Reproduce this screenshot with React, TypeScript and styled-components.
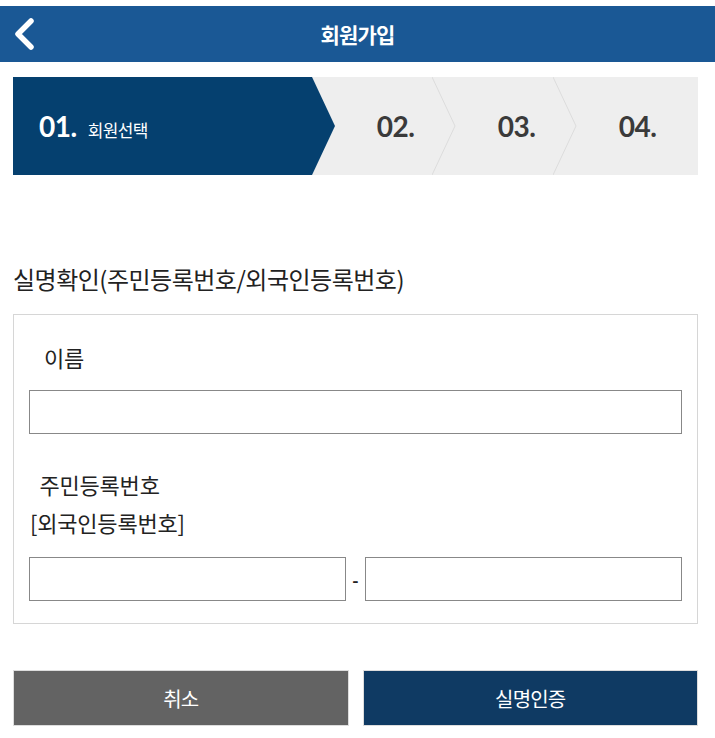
import * as React from 'react';
import styled, { createGlobalStyle } from 'styled-components';

const GlobalStyle = createGlobalStyle`
  body {
    margin: 0;
    background: #ffffff;
    font-family: 'Noto Sans CJK KR', 'Noto Sans', sans-serif;
    color: #222222;
  }
`;

const Page = styled.div`
  padding-top: 6px;
  width: 715px;
`;

const Header = styled.header`
  position: relative;
  height: 56px;
  background: #1a5895;
  display: flex;
  align-items: center;
  justify-content: center;
`;

const BackButton = styled.button`
  position: absolute;
  left: 12px;
  top: 11px;
  width: 26px;
  height: 34px;
  padding: 0;
  border: 0;
  background: none;
  display: flex;
  align-items: center;
  justify-content: center;
`;

const Title = styled.h1`
  margin: 0;
  font-size: 21px;
  font-weight: 700;
  color: #ffffff;
  letter-spacing: -0.8px;
`;

const Content = styled.div`
  padding: 0 17px 0 13px;
`;

const Stepper = styled.ol`
  margin: 15px 0 0;
  padding: 0;
  list-style: none;
  height: 98px;
  background: #eeeeee;
  display: flex;
`;

const ActiveStep = styled.li`
  flex: 0 0 322px;
  background: #05406f;
  clip-path: polygon(0 0, 299px 0, 100% 50%, 299px 100%, 0 100%);
  display: flex;
  align-items: baseline;
  padding: 0 0 0 26px;
  box-sizing: border-box;
  color: #ffffff;
  line-height: 98px;
`;

const Step = styled.li`
  position: relative;
  flex: 0 0 121px;
  display: flex;
  align-items: center;
  justify-content: center;
`;

const StepNum = styled.span<{ $active?: boolean }>`
  font-family: Lato, 'Liberation Sans', sans-serif;
  font-weight: 700;
  font-size: 28px;
  letter-spacing: -0.5px;
  color: ${(p) => (p.$active ? '#ffffff' : '#3a3a3a')};
`;

const StepName = styled.span`
  margin-left: 11px;
  font-size: 17px;
  letter-spacing: -0.6px;
`;

const Divider = styled.svg`
  position: absolute;
  right: 0;
  top: 0;
`;

const Heading = styled.h2`
  margin: 87px 0 0;
  font-size: 24px;
  font-weight: 400;
  line-height: 34px;
  letter-spacing: -0.5px;
  color: #222222;
`;

const FormBox = styled.div`
  margin-top: 18px;
  border: 1px solid #d6d6d6;
  padding: 23px 15px 22px;
`;

const Label = styled.label<{ $indent: number; $gap: number }>`
  display: block;
  margin-top: ${(p) => p.$gap}px;
  padding-left: ${(p) => p.$indent}px;
  font-size: 22px;
  line-height: 38px;
  letter-spacing: -0.2px;
  color: #222222;
`;

const Input = styled.input`
  display: block;
  box-sizing: border-box;
  width: 100%;
  height: 44px;
  margin: 0;
  border: 1px solid #888888;
  border-radius: 0;
  background: #ffffff;
  font-size: 16px;
  padding: 0 10px;
`;

const NameInput = styled(Input)`
  margin-top: 14px;
`;

const IdRow = styled.div`
  margin-top: 16px;
  display: flex;
  align-items: center;
  gap: 6px;
`;

const Dash = styled.span`
  font-size: 17px;
  font-weight: 700;
  color: #222222;
`;

const ButtonRow = styled.div`
  margin-top: 46px;
  display: flex;
  gap: 14px;
`;

const ActionButton = styled.button<{ $primary?: boolean }>`
  flex: 1;
  height: 56px;
  border: 1px solid #dddddd;
  background: ${(p) => (p.$primary ? '#0f3a63' : '#636363')};
  color: #ffffff;
  font-family: 'Noto Sans CJK KR', sans-serif;
  font-size: 20px;
  letter-spacing: -0.8px;
`;

const steps = ['02.', '03.', '04.'];

export default function App() {
  return (
    <Page>
      <GlobalStyle />
      <Header>
        <BackButton aria-label="back">
          <svg width="24" height="34" viewBox="0 0 24 34">
            <polyline
              points="18,4 5,17 18,30"
              fill="none"
              stroke="#ffffff"
              strokeWidth="5.5"
              strokeLinecap="round"
              strokeLinejoin="round"
            />
          </svg>
        </BackButton>
        <Title>회원가입</Title>
      </Header>
      <Content>
        <Stepper>
          <ActiveStep>
            <StepNum $active>01.</StepNum>
            <StepName>회원선택</StepName>
          </ActiveStep>
          {steps.map((s, i) => (
            <Step key={s}>
              <StepNum>{s}</StepNum>
              {i < steps.length - 1 && (
                <Divider width="24" height="98" viewBox="0 0 24 98">
                  <polyline points="0,0 23,49 0,98" fill="none" stroke="#dcdcdc" strokeWidth="1" />
                </Divider>
              )}
            </Step>
          ))}
        </Stepper>
        <Heading>실명확인(주민등록번호/외국인등록번호)</Heading>
        <FormBox>
          <Label $indent={15} $gap={0}>이름</Label>
          <NameInput type="text" />
          <Label $indent={1} $gap={31}>
            &nbsp;&nbsp;주민등록번호
            <br />
            [외국인등록번호]
          </Label>
          <IdRow>
            <Input type="text" />
            <Dash>-</Dash>
            <Input type="password" />
          </IdRow>
        </FormBox>
        <ButtonRow>
          <ActionButton>취소</ActionButton>
          <ActionButton $primary>실명인증</ActionButton>
        </ButtonRow>
      </Content>
    </Page>
  );
}
